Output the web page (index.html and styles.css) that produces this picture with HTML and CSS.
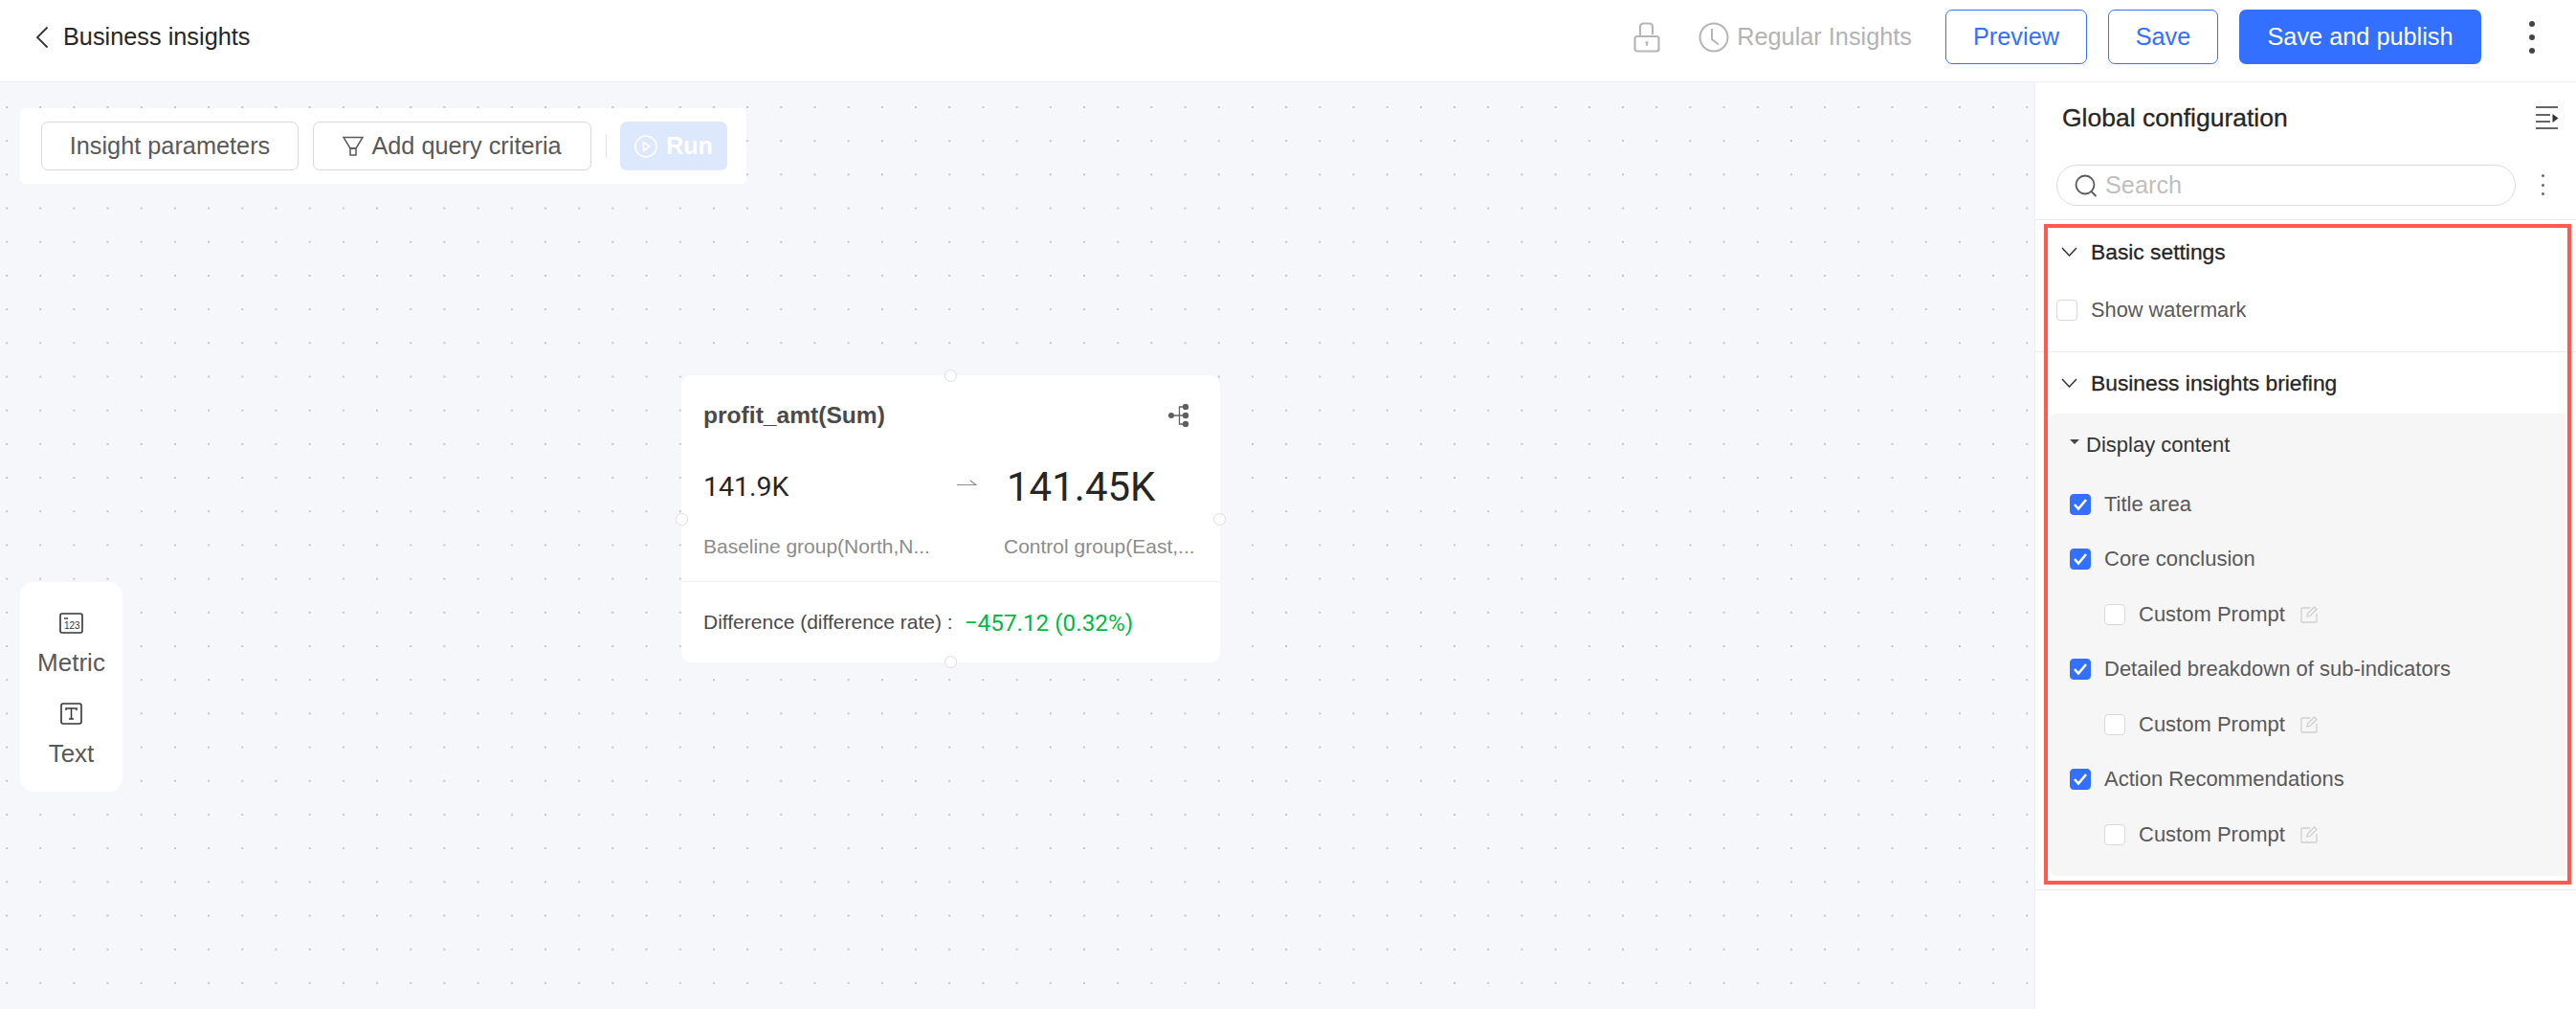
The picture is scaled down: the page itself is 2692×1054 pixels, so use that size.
FILE: index.html
```html
<!DOCTYPE html>
<html lang="en">
<head>
<meta charset="utf-8">
<title>Business insights</title>
<link rel="stylesheet" href="styles.css">
</head>
<body>
<div class="page">
  <header class="topbar">
    <div class="topbar-left">
      <svg class="back" width="14" height="24" viewBox="0 0 14 24"><path d="M12.5 1.5 2 12l10.500 10.500" fill="none" stroke="#333" stroke-width="1.800"/></svg>
      <span class="page-title">Business insights</span>
    </div>
    <div class="topbar-right">
      <svg class="lock" width="28" height="32" viewBox="0 0 28 32" fill="none" stroke="#b5b5b5" stroke-width="2.200"><path d="M7 15V5a3.500 3.500 0 0 1 3.500-3.500h6A3.500 3.500 0 0 1 20 5v8"/><rect x="1.500" y="15" width="25" height="15.500" rx="2.500"/><circle cx="14" cy="21.500" r="1.600" fill="#b5b5b5" stroke="none"/><path d="M14 22v3" stroke-width="1.600"/></svg>
      <span class="regular">
        <svg width="32" height="32" viewBox="0 0 32 32" fill="none" stroke="#b5b5b5" stroke-width="2"><circle cx="16" cy="16" r="14.500"/><path d="M14 7v11l7 5.500"/></svg>
        Regular Insights
      </span>
      <button class="btn-outline btn-preview">Preview</button>
      <button class="btn-outline btn-save">Save</button>
      <button class="btn-primary">Save and publish</button>
      <span class="kebab"><i></i><i></i><i></i></span>
    </div>
  </header>
  <div class="main">
    <section class="canvas">
      <div class="toolbar">
        <button class="tool-btn tool-params">Insight parameters</button>
        <button class="tool-btn tool-query">
          <svg width="22" height="22" viewBox="0 0 22 22" fill="none" stroke="#595959" stroke-width="1.500"><path d="M1 1.500h20l-7 11.500H8z"/><rect x="8" y="13" width="6" height="7"/></svg>
          Add query criteria
        </button>
        <span class="tool-sep"></span>
        <button class="tool-run">
          <svg width="24" height="24" viewBox="0 0 24 24" fill="none" stroke="#fff" stroke-width="1.600"><circle cx="12" cy="12" r="11"/><path d="M9.500 7.500v9l6.500-4.500z"/></svg>
          Run
        </button>
      </div>

      <div class="palette">
        <div class="palette-item">
          <svg width="25" height="22" viewBox="0 0 25 22" fill="none"><rect x="1" y="1" width="23" height="20" rx="2" stroke="#333" stroke-width="1.600"/><path d="M5 6h4" stroke="#333" stroke-width="1.400"/><text x="5" y="17" class="icon-num">123</text></svg>
          <span>Metric</span>
        </div>
        <div class="palette-item">
          <svg width="23" height="23" viewBox="0 0 23 23" fill="none" stroke="#333"><rect x="1" y="1" width="21" height="21" rx="2" stroke-width="1.600"/><path d="M6 8V6h11v2M11.500 6v11M9 17h5" stroke-width="1.500"/></svg>
          <span>Text</span>
        </div>
      </div>

      <article class="card">
        <i class="handle handle-t"></i><i class="handle handle-l"></i><i class="handle handle-r"></i><i class="handle handle-b"></i>
        <div class="card-head">
          <span class="card-title">profit_amt(Sum)</span>
          <svg width="22" height="24" viewBox="0 0 22 24" fill="#5f5f5f" stroke="#5f5f5f"><circle cx="3" cy="12" r="3" stroke="none"/><circle cx="18" cy="3" r="3.200" stroke="none"/><circle cx="18" cy="12" r="3.200" stroke="none"/><circle cx="18" cy="21" r="3.200" stroke="none"/><path d="M3 12h15M18 3h-6.500v18H18" fill="none" stroke-width="1.300"/></svg>
        </div>
        <div class="card-values">
          <div class="val-col val-base">
            <span class="val-small">141.9K</span>
            <span class="val-label">Baseline group(North,N...</span>
          </div>
          <svg class="arrow" width="21" height="6" viewBox="0 0 21 6" fill="none" stroke="#8c8c8c" stroke-width="1.200"><path d="M0 5.500h20L14 1"/></svg>
          <div class="val-col val-ctrl">
            <span class="val-big">141.45K</span>
            <span class="val-label">Control group(East,...</span>
          </div>
        </div>
        <div class="card-foot">
          <span class="diff-label">Difference (difference rate) :</span>
          <span class="diff-value">−457.12 (0.32%)</span>
        </div>
      </article>
    </section>

    <aside class="side">
      <div class="side-head">
        <span class="side-title">Global configuration</span>
        <svg width="24" height="24" viewBox="0 0 24 24" fill="none" stroke="#333" stroke-width="1.600"><path d="M0 1h23M0 23h23M0 9h15M0 16h15"/><path d="M17.500 8v9l6-4.500z" fill="#333" stroke="none"/></svg>
      </div>
      <div class="side-search">
        <div class="search-box">
          <svg width="24" height="26" viewBox="0 0 24 26" fill="none" stroke="#595959" stroke-width="1.800"><circle cx="11" cy="12" r="9.500"/><path d="m17.500 19 5 5"/></svg>
          <span class="search-text">Search</span>
        </div>
        <span class="kebab kebab-small"><i></i><i></i><i></i></span>
      </div>

      <div class="sec-head">
        <svg width="17" height="10" viewBox="0 0 17 10" fill="none" stroke="#333" stroke-width="1.500"><path d="m1 1 7.500 8L16 1"/></svg>
        <span>Basic settings</span>
      </div>
      <label class="watermark-row"><span class="cb"></span><span>Show watermark</span></label>

      <div class="sec-head sec-head-second">
        <svg width="17" height="10" viewBox="0 0 17 10" fill="none" stroke="#333" stroke-width="1.500"><path d="m1 1 7.500 8L16 1"/></svg>
        <span>Business insights briefing</span>
      </div>
      <div class="panel">
        <div class="panel-head"><i class="caret"></i><span>Display content</span></div>
        <label class="row"><span class="cb cb-on"><svg width="16" height="14" viewBox="0 0 16 14"><path d="m2 7 4 4.500L14 2" fill="none" stroke="#fff" stroke-width="2.600"/></svg></span><span>Title area</span></label>
        <label class="row"><span class="cb cb-on"><svg width="16" height="14" viewBox="0 0 16 14"><path d="m2 7 4 4.500L14 2" fill="none" stroke="#fff" stroke-width="2.600"/></svg></span><span>Core conclusion</span></label>
        <label class="row row-sub"><span class="cb"></span><span>Custom Prompt</span><svg class="edit" width="18" height="18" viewBox="0 0 18 18" fill="none" stroke="#cfcfcf" stroke-width="1.300"><path d="M10 2H2a1 1 0 0 0-1 1v13a1 1 0 0 0 1 1h14a1 1 0 0 0 1-1V8"/><path d="m7 11 .5-3L14.500 1 17 3.500 10 10.500z"/></svg></label>
        <label class="row"><span class="cb cb-on"><svg width="16" height="14" viewBox="0 0 16 14"><path d="m2 7 4 4.500L14 2" fill="none" stroke="#fff" stroke-width="2.600"/></svg></span><span>Detailed breakdown of sub-indicators</span></label>
        <label class="row row-sub"><span class="cb"></span><span>Custom Prompt</span><svg class="edit" width="18" height="18" viewBox="0 0 18 18" fill="none" stroke="#cfcfcf" stroke-width="1.300"><path d="M10 2H2a1 1 0 0 0-1 1v13a1 1 0 0 0 1 1h14a1 1 0 0 0 1-1V8"/><path d="m7 11 .5-3L14.500 1 17 3.500 10 10.500z"/></svg></label>
        <label class="row"><span class="cb cb-on"><svg width="16" height="14" viewBox="0 0 16 14"><path d="m2 7 4 4.500L14 2" fill="none" stroke="#fff" stroke-width="2.600"/></svg></span><span>Action Recommendations</span></label>
        <label class="row row-sub"><span class="cb"></span><span>Custom Prompt</span><svg class="edit" width="18" height="18" viewBox="0 0 18 18" fill="none" stroke="#cfcfcf" stroke-width="1.300"><path d="M10 2H2a1 1 0 0 0-1 1v13a1 1 0 0 0 1 1h14a1 1 0 0 0 1-1V8"/><path d="m7 11 .5-3L14.500 1 17 3.500 10 10.500z"/></svg></label>
      </div>
      <div class="side-end"></div>
      <div class="highlight"></div>
    </aside>
  </div>
</div>
</body>
</html>
```

FILE: styles.css
```css
* { box-sizing: border-box; }
html, body { margin: 0; height: 100%; }
body { font-family: "Liberation Sans", Arial, sans-serif; color: #262626; background: #fff; overflow: hidden; }
button { font-family: inherit; cursor: pointer; }
.page { display: flex; flex-direction: column; height: 1054px; }

/* top bar */
.topbar { height: 86px; flex: none; display: flex; align-items: center; justify-content: space-between; background: #fff; border-bottom: 1px solid #eef0f3; padding: 0 0 8px 37px; }
.topbar-left { display: flex; align-items: center; gap: 15px; }
.back { display: block; }
.page-title { font-size: 25.300px; color: #262626; }
.topbar-right { display: flex; align-items: center; }
.lock { margin-right: 40px; }
.regular { display: flex; align-items: center; gap: 8px; font-size: 25.300px; color: #b3b3b3; margin-right: 35px; }
.btn-outline, .btn-primary { height: 57px; font-size: 25.300px; border-radius: 7px; padding: 0; }
.btn-outline { background: #fff; border: 1.500px solid #3370ff; color: #3370ff; }
.btn-preview { width: 148px; margin-right: 22px; }
.btn-save { width: 115px; margin-right: 22px; }
.btn-primary { width: 253px; background: #3370ff; border: 0; color: #fff; margin-right: 50px; }
.kebab { display: flex; flex-direction: column; gap: 8px; width: 8px; margin-right: 41px; }
.kebab i { width: 6px; height: 6px; border-radius: 50%; background: #444; }

/* canvas */
.main { flex: 1; display: flex; min-height: 0; }
.canvas { position: relative; flex: 1; background-color: #f6f7fb; background-image: radial-gradient(circle at center, #c4c4c8 0, #c4c4c8 .8px, transparent 1.300px); background-size: 35.200px 35.200px; background-position: -10.600px 8.400px; }
.toolbar { position: absolute; left: 21px; top: 27px; width: 759px; height: 79px; background: #fff; border-radius: 6px; display: flex; align-items: center; padding-left: 22px; }
.tool-btn { height: 51px; background: #fff; border: 1.500px solid #d9d9d9; border-radius: 7px; font-size: 25.300px; color: #595959; display: flex; align-items: center; justify-content: center; gap: 8px; padding: 0; }
.tool-params { width: 269px; margin-right: 15px; }
.tool-query { width: 291px; margin-right: 15px; }
.tool-sep { width: 1px; height: 25px; background: #e5e5e5; margin-right: 14px; }
.tool-run { width: 112px; height: 51px; background: #dde8fd; border: 0; border-radius: 7px; color: #fff; font-size: 25px; font-weight: 700; display: flex; align-items: center; justify-content: center; gap: 9px; padding: 0; }

.palette { position: absolute; left: 21px; top: 522px; width: 107px; height: 219px; background: #fff; border-radius: 14px; display: flex; flex-direction: column; align-items: center; padding-top: 32px; }
.palette-item { display: flex; flex-direction: column; align-items: center; gap: 15px; height: 95px; font-size: 26px; color: #595959; }
.palette-item span { line-height: 30px; }
.icon-num { font-family: "Liberation Sans", Arial, sans-serif; font-size: 10px; fill: #333; }

.card { position: absolute; left: 712px; top: 306px; width: 563px; height: 300px; background: #fff; border-radius: 10px; }
.handle { position: absolute; width: 13px; height: 13px; border-radius: 50%; background: #fff; border: 1px solid #dcdcdc; }
.handle-t { left: 275px; top: -6px; }
.handle-b { left: 275px; bottom: -6px; }
.handle-l { left: -6px; top: 144px; }
.handle-r { right: -6px; top: 144px; }
.card-head { display: flex; align-items: center; justify-content: space-between; padding: 0 32px 0 23px; height: 84px; }
.card-title { font-size: 24.600px; font-weight: 700; color: #4a4a4a; }
.card-values { display: flex; align-items: flex-start; height: 132px; border-bottom: 1px solid #f0f0f0; padding-left: 23px; }
.val-col { display: flex; flex-direction: column; padding-top: 8px; }
.val-base { width: 265px; }
.val-ctrl { width: 220px; margin-left: 28px; }
.arrow { margin-top: 25px; flex: none; }
.val-small { height: 50px; line-height: 50px; font-size: 28.500px; font-family: Roboto, "Liberation Sans", sans-serif; color: #262626; }
.val-big { height: 50px; line-height: 50px; font-size: 42px; font-family: Roboto, "Liberation Sans", sans-serif; color: #262626; padding-left: 3px; white-space: nowrap; }
.val-label { margin-top: 25px; line-height: 24px; font-size: 21px; color: #8c8c8c; white-space: nowrap; }
.card-foot { display: flex; align-items: center; height: 84px; padding-left: 23px; gap: 12px; }
.diff-label { font-size: 21px; color: #4a4a4a; }
.diff-value { font-size: 24.300px; color: #00b843; font-family: Roboto, "Liberation Sans", sans-serif; }

/* side panel */
.side { position: relative; width: 566px; flex: none; background: #fff; border-left: 1px solid #eef0f3; }
.side-head { height: 74px; display: flex; align-items: center; justify-content: space-between; padding: 0 18px 0 28px; }
.side-title { font-size: 26.500px; font-weight: 500; color: #262626; -webkit-text-stroke: 0.300px #262626; }
.side-search { height: 70px; padding: 12px 0 0 22px; display: flex; align-items: flex-start; gap: 27px; border-bottom: 1px solid #eaeaea; }
.search-box { width: 480px; height: 43px; border: 1.500px solid #dcdcdc; border-radius: 22px; display: flex; align-items: center; gap: 8px; padding-left: 18px; }
.search-text { font-size: 25.300px; color: #bfbfbf; }
.kebab-small { gap: 6.500px; margin: 10px 0 0; width: 3px; }
.kebab-small i { width: 3px; height: 3px; background: #666; }
.sec-head { height: 66px; display: flex; align-items: center; gap: 14px; padding-left: 27px; font-size: 22.800px; color: #262626; -webkit-text-stroke: 0.300px #262626; }
.sec-head-second { height: 64px; }
.watermark-row { height: 72px; padding: 0 0 16px 22px; display: flex; align-items: center; gap: 14px; font-size: 21.800px; color: #595959; border-bottom: 1px solid #eaeaea; }
.cb { width: 22px; height: 22px; flex: none; border: 1px solid #d9d9d9; border-radius: 4px; background: #fff; display: flex; align-items: center; justify-content: center; }
.cb-on { background: #3370ff; border-color: #3370ff; }
.panel { margin: 0 4px 0 14px; height: 483px; background: #f6f6f7; border-radius: 8px 0 0 8px; }
.panel-head { height: 66px; display: flex; align-items: center; padding-left: 22px; gap: 7px; font-size: 22px; color: #333; }
.caret { width: 0; height: 0; border-left: 5.500px solid transparent; border-right: 5.500px solid transparent; border-top: 5px solid #444; margin-top: -7px; }
.row { height: 57.500px; display: flex; align-items: center; padding-left: 22px; gap: 14px; font-size: 22px; color: #595959; }
.row-sub { padding-left: 58px; }
.edit { margin-left: 2px; }
.side-end { margin-top: 14px; border-top: 1px solid #eaeaea; }
.highlight { position: absolute; left: 9px; top: 148px; width: 551px; height: 690px; border: 4px solid #ff5a4f; pointer-events: none; }
```
